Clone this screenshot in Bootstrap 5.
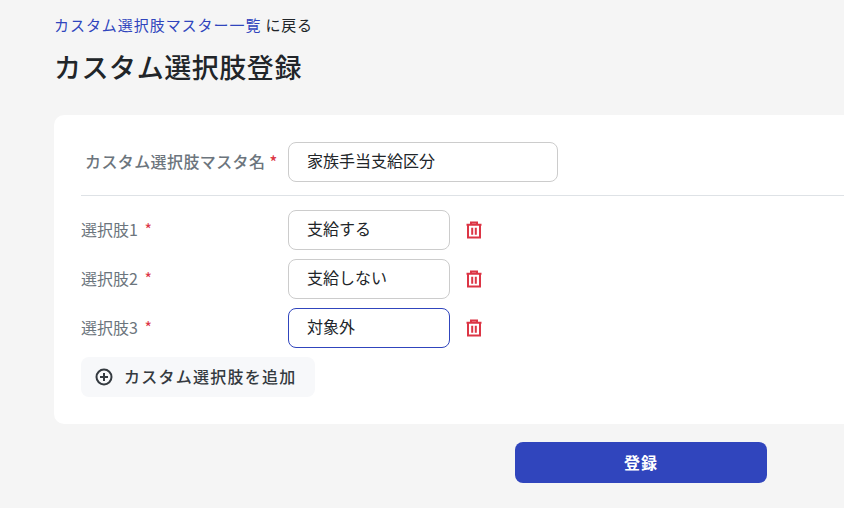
<!DOCTYPE html>
<html lang="ja">
<head>
<meta charset="utf-8">
<title>カスタム選択肢登録</title>
<link rel="stylesheet" href="https://cdn.jsdelivr.net/npm/bootstrap@5.3.0/dist/css/bootstrap.min.css">
<style>
html,body{height:100%;overflow:hidden}
body{background:#f5f5f5;font-family:"Noto Sans CJK JP","Noto Sans",sans-serif;color:#212529;font-size:16px}
.page-wrap{padding:14px 0 0 54px;width:844px}
.back-line{font-size:15px;line-height:22px;letter-spacing:.8px}
.back-line a{color:#3045bd;text-decoration:none;letter-spacing:.95px}
.page-title{font-size:27px;line-height:40px;font-weight:500;margin:11px 0 28px;letter-spacing:.55px}
.form-panel{background:#fff;border-radius:10px;width:900px;height:309px;padding:27px 0 0 27px}
.name-label{width:207px;padding-left:4px;padding-bottom:3px;color:#6c757d;font-weight:500;letter-spacing:.4px;white-space:nowrap}
.name-label .req{margin-left:4px}
.opt-label{width:207px;padding-bottom:2px;color:#6c757d}
.req{color:#dc3545;margin-left:3px}
.txt-input{height:40px;border:1px solid #ccc;border-radius:8px;padding:0 18px 4px;font-size:16px;color:#212529;background:#fff}
.txt-input:focus{box-shadow:none;border-color:#ccc}
.txt-name{width:270px}
.txt-opt{width:162px}
.txt-active,.txt-active:focus{border-color:#3045bd}
.rule{border-top:1px solid #dee2e6;margin:13px 0 14px;opacity:1}
.opt-row{height:40px;margin-bottom:9px}
.del-btn{background:none;border:0;padding:0;margin-left:15px;line-height:0}
.add-btn{background:#f7f8fa;border:0;border-radius:8px;width:234px;height:40px;padding:0 0 2px 14px;font-size:16px;font-weight:500;color:#343a40;letter-spacing:1.25px}
.add-btn svg{margin-right:11px;margin-top:2px}
.submit-zone{width:844px;margin-left:-54px;padding:18px 0 0 515px}
.submit-btn{width:252px;height:41px;background:#3045bd;border:0;border-radius:8px;color:#fff;font-size:16px;font-weight:700;letter-spacing:1px;padding:0 0 1px}
.submit-btn:hover{background:#3045bd;color:#fff}
</style>
</head>
<body>
<div class="page-wrap">
  <div class="back-line"><a href="#">カスタム選択肢マスター一覧</a> に戻る</div>
  <h1 class="page-title">カスタム選択肢登録</h1>
  <div class="form-panel">
    <div class="d-flex align-items-center">
      <label class="name-label">カスタム選択肢マスタ名<span class="req">*</span></label>
      <input class="form-control txt-input txt-name" value="家族手当支給区分">
    </div>
    <hr class="rule">
    <div class="d-flex align-items-center opt-row">
      <label class="opt-label">選択肢1 <span class="req">*</span></label>
      <input class="form-control txt-input txt-opt" value="支給する">
      <button class="del-btn" aria-label="削除"><svg width="18" height="18" viewBox="0 0 18 18" fill="none" stroke="#dc3545" stroke-width="2"><path d="M1.5 3.8h15M6 3.5V1.4h6v2.1M3 4v12.6h12V4M7.2 6.8v7M10.8 6.8v7"/></svg></button>
    </div>
    <div class="d-flex align-items-center opt-row">
      <label class="opt-label">選択肢2 <span class="req">*</span></label>
      <input class="form-control txt-input txt-opt" value="支給しない">
      <button class="del-btn" aria-label="削除"><svg width="18" height="18" viewBox="0 0 18 18" fill="none" stroke="#dc3545" stroke-width="2"><path d="M1.5 3.8h15M6 3.5V1.4h6v2.1M3 4v12.6h12V4M7.2 6.8v7M10.8 6.8v7"/></svg></button>
    </div>
    <div class="d-flex align-items-center opt-row">
      <label class="opt-label">選択肢3 <span class="req">*</span></label>
      <input class="form-control txt-input txt-opt txt-active" value="対象外">
      <button class="del-btn" aria-label="削除"><svg width="18" height="18" viewBox="0 0 18 18" fill="none" stroke="#dc3545" stroke-width="2"><path d="M1.5 3.8h15M6 3.5V1.4h6v2.1M3 4v12.6h12V4M7.2 6.8v7M10.8 6.8v7"/></svg></button>
    </div>
    <button class="add-btn d-flex align-items-center"><svg width="18" height="18" viewBox="0 0 18 18" fill="none" stroke="#343a40" stroke-width="2"><circle cx="9" cy="9" r="7.5"/><path d="M9 5v8M5 9h8"/></svg>カスタム選択肢を追加</button>
  </div>
  <div class="submit-zone"><button class="btn submit-btn">登録</button></div>
</div>
<script src="https://cdn.jsdelivr.net/npm/bootstrap@5.3.0/dist/js/bootstrap.bundle.min.js"></script>
</body>
</html>
